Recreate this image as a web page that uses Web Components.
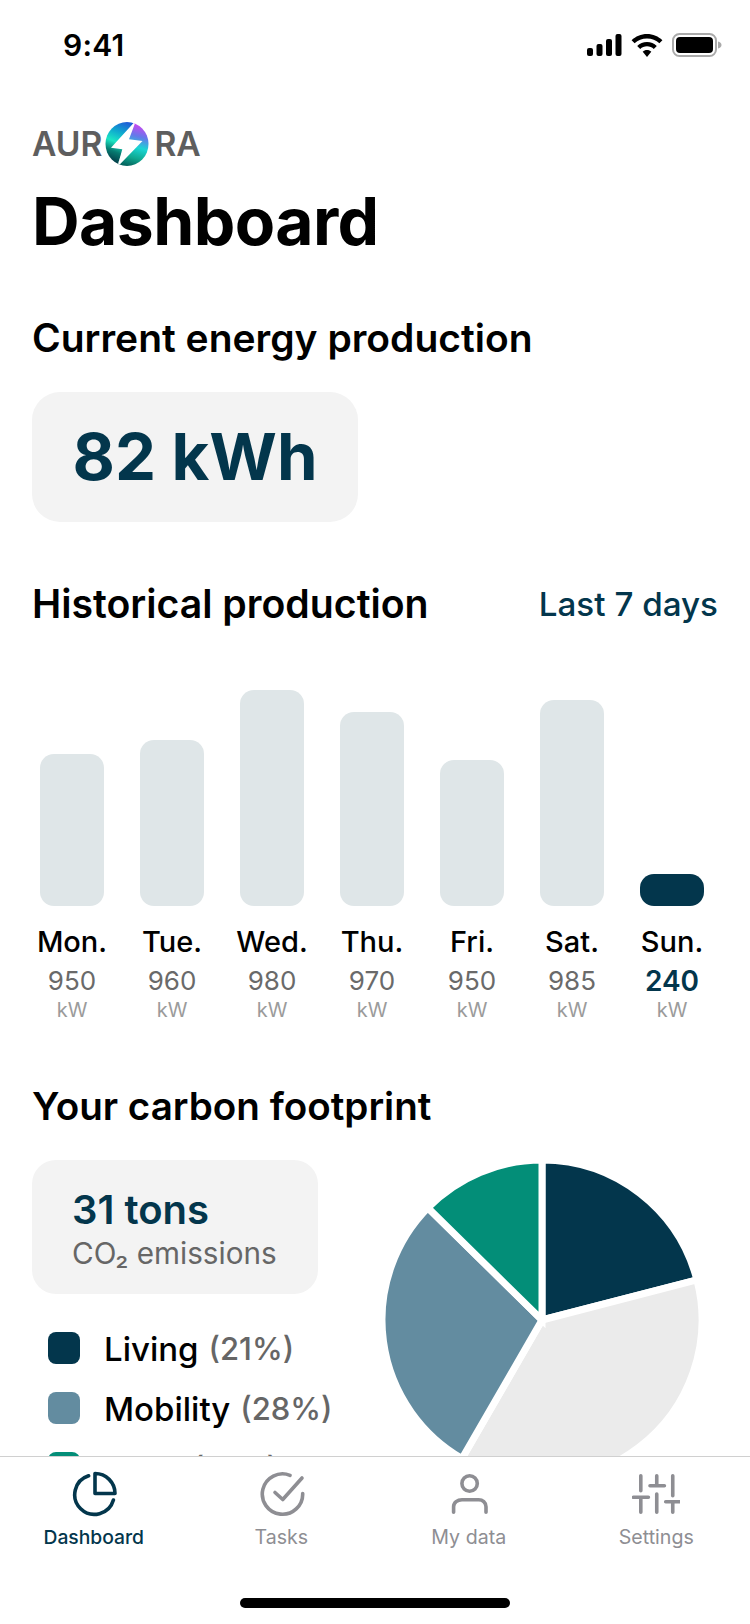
<!DOCTYPE html>
<html lang="en"><head><meta charset="utf-8"><title>Dashboard</title>
<style>
html,body{margin:0;padding:0;background:#fff}
body{width:750px;height:1624px;overflow:hidden;font-family:Inter,"Liberation Sans",sans-serif}
</style></head><body>
<app-screen>
  <status-bar></status-bar>
  <brand-logo></brand-logo>
  <h-title>Dashboard</h-title>
  <sec-head style="margin-top:55px">Current energy production</sec-head>
  <stat-card style="margin-top:32px"></stat-card>
  <sec-head style="margin-top:60px;font-size:39.2px">Historical production<span slot="end">Last 7 days</span></sec-head>
  <bar-chart></bar-chart>
  <sec-head style="margin-top:62px;font-size:38.6px">Your carbon footprint</sec-head>
  <carbon-panel></carbon-panel>
  <tab-bar slot="footer"></tab-bar>
</app-screen>
<script>
const NAVY='#03364c';
function def(name,css,html,extra){
  customElements.define(name,class extends HTMLElement{
    constructor(){super();const r=this.attachShadow({mode:'open'});r.innerHTML=`<style>${css}</style>${html}`;}
    connectedCallback(){extra&&extra.call(this)}
  });
}
def('app-screen',`:host{display:flex;flex-direction:column;width:750px;height:1624px;position:relative;overflow:hidden;color:#000}
.main{flex:1;min-height:0;overflow:hidden;display:flex;flex-direction:column}
`,`<div class="main"><slot></slot></div><slot name="footer"></slot>`);
def('status-bar',`:host{display:flex;justify-content:space-between;align-items:center;height:90px;flex:none;padding:0 28px 0 63px;box-sizing:border-box}
.t{font-size:30px;font-weight:600;line-height:90px;letter-spacing:.2px}
.i{display:flex;align-items:center;gap:9px}svg{display:block}`,
`<span class="t">9:41</span><span class="i">
<svg width="35" height="22" viewBox="0 0 35 22"><rect x="0" y="14" width="6" height="8" rx="2"/><rect x="9.5" y="10" width="6" height="12" rx="2"/><rect x="19" y="5" width="6" height="17" rx="2"/><rect x="28.5" y="0" width="6" height="22" rx="2"/></svg>
<svg width="32" height="23" viewBox="0 0 32 23"><path d="M16 0C10 0 4.600 2.400 .6 6.200l3 3.100C6.800 6.300 11.200 4.400 16 4.400s9.200 1.900 12.400 4.900l3-3.100C27.400 2.400 22 0 16 0z"/><path d="M16 8c-3.800 0-7.200 1.500-9.800 3.900l3 3.100c1.800-1.700 4.200-2.700 6.800-2.700s5 1 6.800 2.700l3-3.100C23.200 9.500 19.800 8 16 8z"/><path d="M16 16c-1.700 0-3.200.7-4.300 1.700L16 23l4.300-5.300C19.200 16.700 17.700 16 16 16z"/></svg>
<svg width="50" height="24" viewBox="0 0 50 24"><rect x="1" y="1" width="43" height="22" rx="6.500" fill="none" stroke="#aaa" stroke-width="2"/><rect x="4" y="4" width="37" height="16" rx="4"/><path d="M46 8.500c2 .4 3.500 1.800 3.500 3.500s-1.500 3.100-3.500 3.500z" fill="#aaa"/></svg>
</span>`);
def('brand-logo',`:host{display:flex;align-items:center;height:44px;flex:none;margin:32px 0 0 32px;font-size:33.6px;font-weight:580;color:#5e5e5e;line-height:44px}
svg{display:block;margin:0 5px 0 3px}`,
`<span>AUR</span><svg width="44" height="44" viewBox="0 0 44 44"><defs>
<linearGradient id="a" x1="0.7" y1="0" x2="0.45" y2="1"><stop offset="0" stop-color="#1f5fd6"/><stop offset=".25" stop-color="#0ea6cf"/><stop offset=".5" stop-color="#1ce6c4"/><stop offset=".72" stop-color="#067a70"/><stop offset="1" stop-color="#02303f"/></linearGradient>
<linearGradient id="b" x1="0.6" y1="0" x2="0.4" y2="1"><stop offset="0" stop-color="#d93ff2"/><stop offset=".3" stop-color="#6578ea"/><stop offset=".55" stop-color="#1ad6d4"/><stop offset=".8" stop-color="#0fa890"/><stop offset="1" stop-color="#05665f"/></linearGradient>
<clipPath id="o"><ellipse cx="22" cy="22" rx="21.500" ry="22"/></clipPath></defs>
<g clip-path="url(#o)"><path fill="url(#a)" d="M0 0H29L12 44H0z"/><path fill="url(#b)" d="M29 0H44V44H12z"/><path fill="#fff" d="M29.500 0L6 25.700 17.300 27.300 12.300 45 37.500 19 24 17.300 30.500 0z"/></g></svg><span>RA</span>`);
def('h-title',`:host{display:block;flex:none;margin:15px 0 0 32px;font-size:66px;font-weight:700;line-height:80px;letter-spacing:-.6px}`,`<slot></slot>`);
def('sec-head',`:host{display:flex;flex:none;justify-content:space-between;align-items:center;padding:0 32px;font-size:39px;font-weight:600;line-height:44px}
::slotted(span){font-size:33.2px;font-weight:500;color:${NAVY}}`,`<span><slot></slot></span><slot name="end"></slot>`);
def('stat-card',`:host{display:block;flex:none;align-self:flex-start;margin-left:32px;width:326px;height:130px;box-sizing:border-box;background:#f3f3f3;border-radius:28px;color:${NAVY};font-size:65.2px;font-weight:650;line-height:130px;text-align:center}`,`82 kWh`);
def('bar-col',`:host{display:flex;flex-direction:column;align-items:center;width:100px}
.b{width:64px;border-radius:14px;background:var(--c,#dfe6e8);height:var(--h)}
.d{margin-top:19px;font-size:29px;font-weight:500;line-height:34px}
.v{margin-top:6px;font-size:26px;line-height:32px;color:#6a6a6a}
.u{font-size:20px;line-height:24px;color:#9b9b9b;margin-top:1px}
:host([on]) .v{color:${NAVY};font-weight:600;font-size:28px}
:host([on]) .b{--c:${NAVY}}`,
`<div class="b"></div><div class="d"></div><div class="v"></div><div class="u">kW</div>`,
function(){const s=this.shadowRoot;s.querySelector('.b').style.setProperty('--h',this.getAttribute('h')+'px');s.querySelector('.d').textContent=this.getAttribute('d');s.querySelector('.v').textContent=this.getAttribute('v');});
def('bar-chart',`:host{display:flex;flex:none;align-items:flex-end;margin:64px 0 0 22px}`,
`<bar-col h="152" d="Mon." v="950"></bar-col><bar-col h="166" d="Tue." v="960"></bar-col><bar-col h="216" d="Wed." v="980"></bar-col><bar-col h="194" d="Thu." v="970"></bar-col><bar-col h="146" d="Fri." v="950"></bar-col><bar-col h="206" d="Sat." v="985"></bar-col><bar-col h="32" d="Sun." v="240" on></bar-col>`);
def('legend-row',`:host{display:flex;align-items:center;height:60px;font-size:33px;font-weight:500;white-space:nowrap}
i{display:block;width:32px;height:32px;border-radius:8px;background:var(--c);margin:0 24px 0 16px;flex:none}
span,b{padding-top:1px}
b{font-weight:500;color:#666;font-size:31px;margin-left:10px}`,
`<i></i><span><slot></slot></span><b><slot name="p"></slot></b>`,
function(){this.shadowRoot.querySelector('i').style.setProperty('--c',this.getAttribute('c'))});
def('carbon-panel',`:host{display:flex;flex:none;margin:32px 0 0 32px;gap:0}
.l{width:349.5px;flex:none}
.c{width:286px;height:134px;box-sizing:border-box;background:#f3f3f3;border-radius:24px;padding:28px 0 0 40px}
.n{font-size:40px;font-weight:600;line-height:44px;color:${NAVY}}
.s{font-size:29.7px;line-height:34px;color:#666;margin-top:4px}
.leg{margin-top:24px;display:flex;flex-direction:column}
svg{display:block;flex:none}`,
`<div class="l"><div class="c"><div class="n">31 tons</div><div class="s">CO₂ emissions</div></div>
<div class="leg"><legend-row c="${NAVY}">Living<span slot="p">(21%)</span></legend-row><legend-row c="#638ca0">Mobility<span slot="p">(28%)</span></legend-row><legend-row c="#038e78">Food<span slot="p">(12%)</span></legend-row></div></div>
<svg width="320" height="320" viewBox="0 0 320 320"><g id="p"></g></svg>`,
function(){
  const g=this.shadowRoot.getElementById('p'),c=160,r=160;
  const seg=[[0,75.5,'#03364c'],[75.5,210,'#ebebeb'],[210,314.5,'#638ca0'],[314.5,360,'#038e78']];
  let h='';
  for(const [a,b,col] of seg){const p=t=>{const q=(t-90)*Math.PI/180;return (c+r*Math.cos(q)).toFixed(2)+' '+(c+r*Math.sin(q)).toFixed(2)};
   h+=`<path d="M${c} ${c}L${p(a)}A${r} ${r} 0 ${b-a>180?1:0} 1 ${p(b)}Z" fill="${col}" stroke="#fff" stroke-width="7" stroke-linejoin="miter"/>`;}
  g.innerHTML=h;
});
def('tab-item',`:host{display:flex;flex:1;flex-direction:column;align-items:center;color:#8e8e93;font-size:19.6px;font-weight:400;line-height:24px}
:host([on]){color:${NAVY};font-weight:500;font-size:19.3px}`,`<slot name="i"></slot><span><slot></slot></span>`);
const S='fill="none" stroke="currentColor" stroke-width="3.600" stroke-linecap="round" stroke-linejoin="round"';
def('tab-bar',`:host{display:flex;flex:none;height:168px;box-sizing:border-box;border-top:1.500px solid #d0d0d0;background:#fff;padding-top:13px;position:relative}
.h{position:absolute;left:240px;top:141px;width:270px;height:10px;border-radius:5px;background:#000}
svg{display:block;margin-bottom:7px}`,
`<tab-item on><svg slot="i" width="48" height="48" viewBox="0 0 48 48" ${S}><path d="M18.600 5.800A19.700 19.700 0 1 0 43.400 30"/><path d="M25 3.500A20 20 0 0 1 45 23.500H25z"/></svg>Dashboard</tab-item>
<tab-item><svg slot="i" width="48" height="48" viewBox="0 0 48 48" ${S}><path d="M33 5.300A20.200 20.200 0 1 0 45.700 23.500"/><path d="M18 22.500L25.750 29.500 45 8"/></svg>Tasks</tab-item>
<tab-item><svg slot="i" width="48" height="48" viewBox="0 0 48 48" ${S}><circle cx="24.600" cy="13.500" r="7.700"/><path d="M8.600 42.200V36.700C8.600 32.500 12.500 29.700 17 29.700H33.700C37.500 29.700 41 32.500 41 36.700V42.200"/></svg>My data</tab-item>
<tab-item><svg slot="i" width="48" height="48" viewBox="0 0 48 48" ${S}><path d="M8.800 5.800V20.700M8.800 27.300V42.200M1.400 27.300H16.400M24.750 5.800V15.700M18 15.700H32.400M24.750 24V42.200M40.750 5.800V25.700M33.700 31.700H48M40.750 31.700V42.200"/></svg>Settings</tab-item>
<div class="h"></div>`);
</script>
</body></html>
